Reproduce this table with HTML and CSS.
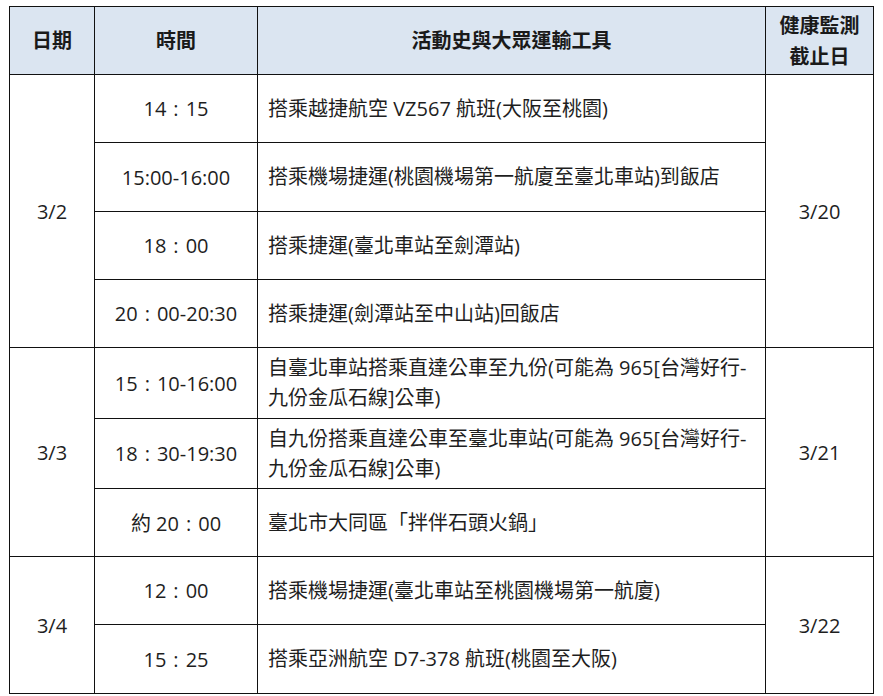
FILE: index.html
```html
<!DOCTYPE html>
<html lang="zh-Hant">
<head>
<meta charset="utf-8">
<link rel="stylesheet" href="styles.css">
</head>
<body>
<table class="tbl">
  <colgroup>
    <col class="c1"><col class="c2"><col class="c3"><col class="c4">
  </colgroup>
  <thead>
    <tr class="head">
      <th>日期</th>
      <th>時間</th>
      <th>活動史與大眾運輸工具</th>
      <th>健康監測<br>截止日</th>
    </tr>
  </thead>
  <tbody>
    <tr class="r68">
      <td class="ctr" rowspan="4">3/2</td>
      <td class="ctr">14<span class="col">:</span>15</td>
      <td class="act">搭乘越捷航空 VZ567 航班(大阪至桃園)</td>
      <td class="ctr" rowspan="4">3/20</td>
    </tr>
    <tr class="r69">
      <td class="ctr">15:00-16:00</td>
      <td class="act">搭乘機場捷運(桃園機場第一航廈至臺北車站)到飯店</td>
    </tr>
    <tr class="r68">
      <td class="ctr">18<span class="col">:</span>00</td>
      <td class="act">搭乘捷運(臺北車站至劍潭站)</td>
    </tr>
    <tr class="r68">
      <td class="ctr">20<span class="col">:</span>00-20:30</td>
      <td class="act">搭乘捷運(劍潭站至中山站)回飯店</td>
    </tr>
    <tr class="r71">
      <td class="ctr" rowspan="3">3/3</td>
      <td class="ctr">15<span class="col">:</span>10-16:00</td>
      <td class="act two">自臺北車站搭乘直達公車至九份(可能為 965[台灣好行-<br>九份金瓜石線]公車)</td>
      <td class="ctr" rowspan="3">3/21</td>
    </tr>
    <tr class="r70">
      <td class="ctr">18<span class="col">:</span>30-19:30</td>
      <td class="act two">自九份搭乘直達公車至臺北車站(可能為 965[台灣好行-<br>九份金瓜石線]公車)</td>
    </tr>
    <tr class="r68">
      <td class="ctr">約 20<span class="col">:</span>00</td>
      <td class="act">臺北市大同區「拌伴石頭火鍋」</td>
    </tr>
    <tr class="r68">
      <td class="ctr" rowspan="2">3/4</td>
      <td class="ctr">12<span class="col">:</span>00</td>
      <td class="act">搭乘機場捷運(臺北車站至桃園機場第一航廈)</td>
      <td class="ctr" rowspan="2">3/22</td>
    </tr>
    <tr class="r69">
      <td class="ctr">15<span class="col">:</span>25</td>
      <td class="act">搭乘亞洲航空 D7-378 航班(桃園至大阪)</td>
    </tr>
  </tbody>
</table>
</body>
</html>
```

FILE: styles.css
```css
html, body {
  margin: 0;
  padding: 0;
  background: #ffffff;
}
body {
  padding: 6px 0 0 9px;
  font-family: "Open Sans", "Noto Sans CJK TC", sans-serif;
  font-size: 20px;
  color: #1e1e1e;
}
.tbl {
  border-collapse: collapse;
  table-layout: fixed;
  width: 864px;
}
.c1 { width: 85px; }
.c2 { width: 163px; }
.c3 { width: 508px; }
.c4 { width: 108px; }
.tbl th, .tbl td {
  border: 1px solid #111111;
  padding: 0;
  vertical-align: middle;
}
.head {
  height: 68px;
  background: #dbe5f1;
}
.head th {
  font-weight: bold;
  line-height: 31px;
  text-align: center;
  color: #1a1a1a;
}
.ctr {
  text-align: center;
}
.col {
  margin: 0 7px;
}
.act {
  text-align: left;
  padding-left: 10px !important;
  line-height: 30px;
  white-space: nowrap;
}
.r68 { height: 68px; }
.r69 { height: 69px; }
.r70 { height: 70px; }
.r71 { height: 71px; }
```
